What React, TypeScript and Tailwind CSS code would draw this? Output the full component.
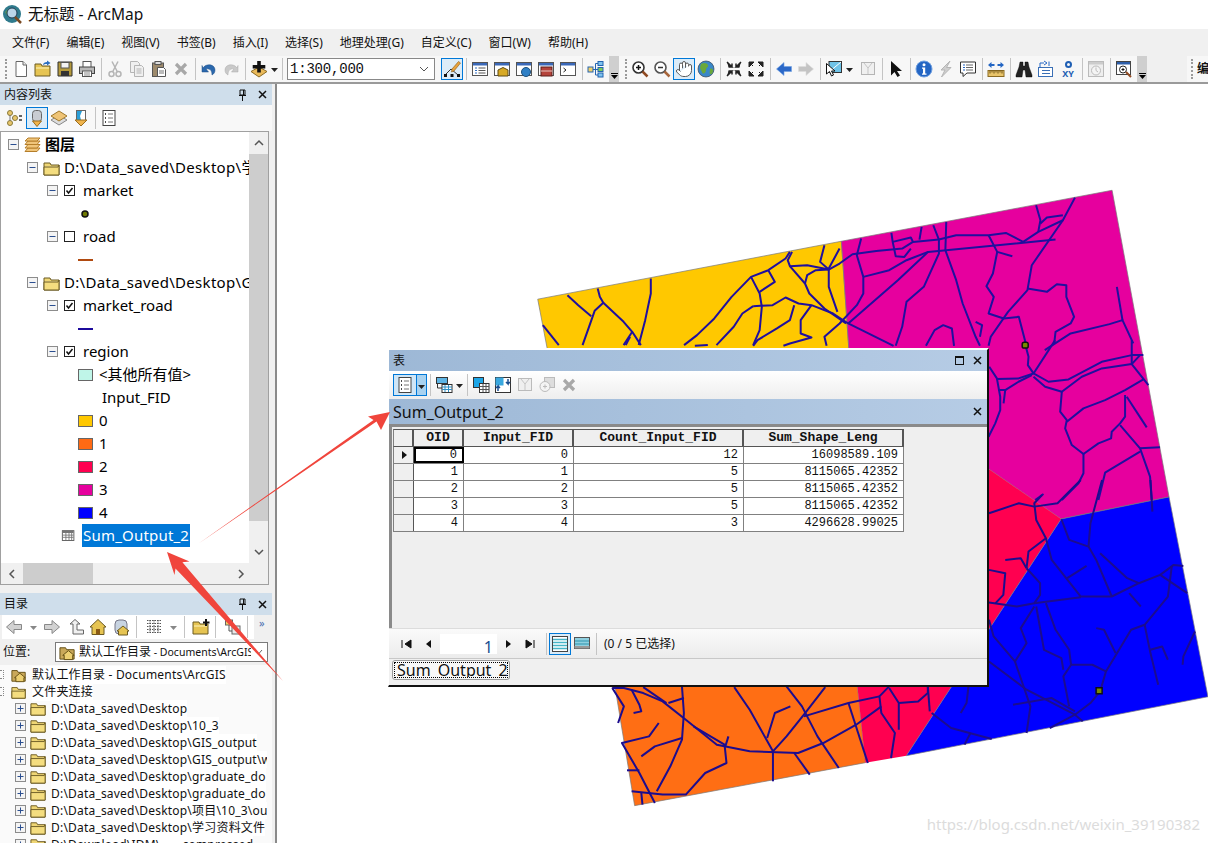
import React from "react";
import { Hand } from "lucide-react";

type N = React.ReactNode;
const S = ({ c, s = 18 }: { c: N; s?: number }) => (
  <svg width={s} height={s} viewBox="0 0 18 18" className="block">{c}</svg>
);

const folder = (f = "#f3dc7a") => (
  <>
    <path d="M1 4h6l1 2h8v10H1z" fill={f} stroke="#6b5a22" />
    <path d="M2 8h13" stroke="#fff6c0" />
  </>
);
const win = (c: N) => (
  <>
    <rect x="1.5" y="2.5" width="15" height="13" fill="#fff" stroke="#555" />
    <rect x="2" y="3" width="14" height="2.5" fill="#3a68b8" />
    {c}
  </>
);

const I: Record<string, N> = {
  doc: <><path d="M4 1.5h7l3.5 3.5v11.5H4z" fill="#fff" stroke="#666" /><path d="M11 1.5V5h3.5" fill="#eee" stroke="#666" /></>,
  open: <>{folder("#e6c452")}<path d="M9 5c0-2 2-3 4-3V.5l3.5 2.5L13 5.500V4c-2 0-3 .5-4 1z" fill="#2c6fc0" /></>,
  save: <><path d="M2 2h14v14H2z" fill="#b59a3c" stroke="#2f2f2f" /><rect x="5" y="2.500" width="8" height="5.500" fill="#f3f3f3" stroke="#555" /><rect x="5" y="11" width="8" height="5" fill="#333" /></>,
  print: <><rect x="5" y="1.500" width="8" height="6" fill="#fff" stroke="#555" /><rect x="1.500" y="7" width="15" height="6.500" fill="#b9b9b9" stroke="#444" /><rect x="4.500" y="11" width="9" height="5.500" fill="#fff" stroke="#555" /><path d="M6 13h6M6 15h6" stroke="#888" /></>,
  cut: <g stroke="#b5b5b5" fill="none" strokeWidth="1.500"><circle cx="5.500" cy="14" r="2.500" /><circle cx="12.500" cy="14" r="2.500" /><path d="M6.500 12 12 1.500M11.500 12 6 1.500" /></g>,
  copy: <g fill="#f0f0f0" stroke="#b5b5b5"><path d="M2.500 1.500h7l2 2v9h-9z" /><path d="M6.500 5.500h7l2 2v9h-9z" /><path d="M8.500 9h5M8.500 11h5M8.500 13h5" /></g>,
  paste: <><rect x="2.500" y="3" width="11" height="13.500" fill="#9d8a6c" stroke="#555" /><rect x="5" y="1.500" width="6" height="3" fill="#ddd" stroke="#555" /><path d="M7.500 7.500h6l2 2v7h-8z" fill="#fff" stroke="#555" /><path d="M9 11h5M9 13h5" stroke="#777" /></>,
  del: <path d="M4 4l10 10M14 4 4 14" stroke="#a8a8a8" strokeWidth="3.200" />,
  undo: <path d="M3 8c3-5 12-4 12 2 0 2-1 4-3 5 0-3-1-7-6-6l2.500 3H2V5.500z" fill="#2b68ad" stroke="#1d4d85" strokeWidth=".5" />,
  redo: <path d="M15 8C12 3 3 4 3 10c0 2 1 4 3 5 0-3 1-7 6-6l-2.500 3H16V5.500z" fill="#c9c9c9" stroke="#aaa" strokeWidth=".5" />,
  add: <><path d="M9 7 17 11.500 9 17 1 11.500z" fill="#e9b95a" stroke="#8a6a22" /><path d="M7.200 1h3.600v4h4.500v3.400h-4.500v4H7.200v-4H2.700V5h4.500z" fill="#111" /></>,
  edit: <><path d="M2 15 8 9l7 6" fill="none" stroke="#333" /><rect x="1" y="14" width="3" height="3" fill="#111" /><rect x="7.500" y="14" width="3" height="3" fill="#111" /><rect x="14" y="14" width="3" height="3" fill="#111" /><path d="M9 9 15.500 1.500l2 1.500L11 11l-2.500 1z" fill="#e8a33e" stroke="#8a5a14" strokeWidth=".6" /></>,
  w1: win(<><path d="M4 8h2M4 10.500h2M4 13h2" stroke="#2f6cc0" /><path d="M7.500 8h7M7.500 10.500h7M7.500 13h7" stroke="#555" /></>),
  w2: win(<path d="M5 16V10l5-2.500 5 2.500v6z" fill="#d7a925" stroke="#5f4a10" />),
  w3: win(<circle cx="11" cy="12" r="4.500" fill="#2f7fc5" stroke="#1c4f7c" />),
  w4: win(<><rect x="4" y="7" width="11" height="9" fill="#b5433b" stroke="#5c1e1a" /><path d="M4 11h11" stroke="#e9c5c0" /></>),
  w5: win(<path d="M4.500 8 7 10l-2.500 2" fill="none" stroke="#222" />),
  tree: <><rect x="1" y="7" width="5" height="5" fill="#f3d066" stroke="#2464b0" /><rect x="11" y="1.500" width="5" height="4" fill="#7ec3ee" stroke="#2464b0" /><rect x="11" y="7.500" width="5" height="4" fill="#7ccc5a" stroke="#2464b0" /><rect x="11" y="13" width="5" height="4" fill="#7ec3ee" stroke="#2464b0" /><path d="M6 9.500h5M8.500 3.500v11.500M8.500 3.500H11M8.500 15H11" stroke="#2464b0" fill="none" /></>,
  zin: <><circle cx="7.500" cy="7.500" r="5.500" fill="#fff" stroke="#333" strokeWidth="1.600" /><path d="M5 7.500h5M7.500 5v5" stroke="#111" strokeWidth="1.500" /><path d="m11.500 11.500 5 5" stroke="#8f4a22" strokeWidth="2.500" /></>,
  zout: <><circle cx="7.500" cy="7.500" r="5.500" fill="#fff" stroke="#555" strokeWidth="1.600" /><path d="M5 7.500h5" stroke="#333" strokeWidth="1.500" /><path d="m11.500 11.500 5 5" stroke="#a8663c" strokeWidth="2.500" /></>,
  globe: <><circle cx="9" cy="9" r="8" fill="#3a87c8" stroke="#345" strokeWidth=".7" /><path d="M4 4c3-2 6-1 7 1s-2 2-2 5-3 5-4 2-3-3-1-8zM13 9c2-1 3 0 3 2s-2 4-3 3 0-3 0-5z" fill="#6aa83a" /></>,
  fin: <path d="M2 2l5 5H3.500M7 7V3.500M16 2l-5 5h3.500M11 7V3.500M2 16l5-5H3.500M7 11v3.500M16 16l-5-5h3.500M11 11v3.500" stroke="#222" strokeWidth="1.500" fill="#222" />,
  fout: <path d="M7 2H2v5zM11 2h5v5zM7 16H2v-5zM11 16h5v-5zM3 3l3 3M15 3l-3 3M3 15l3-3M15 15l-3-3" stroke="#222" fill="#222" />,
  back: <path d="M1.500 9 9 2.500v4h7.500v5H9v4z" fill="#2b68c8" stroke="#6f9fe0" strokeWidth=".6" />,
  fwd: <path d="M16.500 9 9 2.500v4H1.500v5H9v4z" fill="#c4c4c4" stroke="#ddd" strokeWidth=".6" />,
  sel: <><rect x="4" y="1.500" width="12.500" height="11" fill="#6fc3e8" stroke="#333" /><path d="M4 12 16 2" stroke="#fff" /><path d="M1.500 3.500 1.500 14l3-2.500 2 4.500 2-1-2-4H10z" fill="#fff" stroke="#111" /></>,
  clr: <><rect x="2.500" y="2.500" width="13" height="12" fill="#f0f0f0" stroke="#b5b5b5" /><path d="m5 3 4 5 4-5M9 8v6" fill="none" stroke="#c5c5c5" /></>,
  arrow: <path d="M4 1v14.500l3.500-3.500 3 5 2.500-1.500-3-4.500H15z" fill="#111" />,
  info: <><circle cx="9" cy="9" r="8" fill="#2466c4" stroke="#6f9fe0" /><circle cx="9" cy="4.800" r="1.500" fill="#fff" /><path d="M7 7.500h3.200v6H11.500v1.200H7v-1.200h1v-4.800H7z" fill="#fff" /></>,
  flash: <path d="M13 1 4 10h4L4.500 17 14 7.500H9.500z" fill="#cfcfcf" stroke="#b5b5b5" />,
  msg: <><path d="M1.500 2h15v11H8l-4 3.500V13H1.500z" fill="#fff" stroke="#333" /><path d="M4 5h2M4 7.500h2M4 10h2" stroke="#2466c4" strokeWidth="1.200" /><path d="M7 5h7M7 7.500h7M7 10h7" stroke="#666" /></>,
  ruler: <><path d="M1 5 4.500 2v2h3v2h-3v2zM17 5l-3.500-3v2h-3v2h3v2z" fill="#2466c4" /><rect x="1" y="10.500" width="16" height="6" fill="#e9c46a" stroke="#8a6a22" /><path d="M3 10.500v3M5 10.500v2M7 10.500v3M9 10.500v2M11 10.500v3M13 10.500v2M15 10.500v3" stroke="#6e5316" /></>,
  bino: <path d="M5 2h3v4h2V2h3l1 5 3 8v2h-6l-1-7H8l-1 7H1v-2l3-8z" fill="#222" stroke="#000" strokeWidth=".4" />,
  route: <><rect x="1.500" y="7.500" width="14" height="9" fill="#fff" stroke="#3a6fb5" /><path d="M5 10.500h8M5 13.500h8" stroke="#3a6fb5" /><path d="M3 8V3h4M7 1l3 2-3 2M12 6V1.500" stroke="#2466c4" fill="none" /></>,
  clock: <><rect x="1.500" y="1.500" width="15" height="15" fill="#eee" stroke="#bbb" /><rect x="2" y="2" width="14" height="2.500" fill="#ccc" /><circle cx="9" cy="10.500" r="4.500" fill="#f4f4f4" stroke="#bbb" /><path d="M9 7.500v3l2 1.500" stroke="#bbb" fill="none" /></>,
  zwin: <><rect x="1.500" y="1.500" width="14" height="13" fill="#fff" stroke="#444" /><rect x="2" y="2" width="13" height="2.500" fill="#2c5da8" /><circle cx="8" cy="9.500" r="3.500" fill="#fff" stroke="#222" /><path d="M6.500 9.500h3M8 8v3" stroke="#111" /><path d="m11 12 5 5" stroke="#8f4a22" strokeWidth="2" /></>,
  tocD: <><circle cx="4" cy="4" r="2.500" fill="#e8c66a" stroke="#8a7a3a" /><circle cx="9" cy="9" r="2.500" fill="#e8c66a" stroke="#8a7a3a" /><circle cx="4" cy="14" r="2.500" fill="#e8c66a" stroke="#8a7a3a" /><path d="M4 6v6M6 9h1" stroke="#777" /><path d="M13 7h3M13 11h3" stroke="#333" strokeWidth="1.500" /></>,
  tocS: <><rect x="4.500" y="1.500" width="9" height="11" rx="3" fill="#c8ccd2" stroke="#666" /><path d="M4.500 12 9 17.500l4.500-5.500z" fill="#f0b44c" stroke="#9a6d1f" /></>,
  tocV: <><path d="M9 6 17 11 9 16 1 11z" fill="#ddd" stroke="#888" /><path d="M9 2 17 7 9 12 1 7z" fill="#efc476" stroke="#a0792c" /></>,
  tocL: <><rect x="4.500" y="1.500" width="9" height="10" fill="#fff" stroke="#666" /><path d="M5 2h5l-2 5 1 4H5z" fill="#2b9fd8" /><path d="M3 11 9 17l6-6z" fill="#f0b44c" stroke="#9a6d1f" /></>,
  opt: <><rect x="3" y="1.500" width="12" height="15" fill="#fff" stroke="#444" /><path d="M5 5h1M5 9h1M5 13h1" stroke="#111" strokeWidth="1.500" /><path d="M8 5h5M8 9h5M8 13h5" stroke="#777" /></>,
  bk2: <path d="M1.500 9 9 2.500v4h7.500v5H9v4z" fill="#d2d2d2" stroke="#888" />,
  fw2: <path d="M16.500 9 9 2.500v4H1.500v5H9v4z" fill="#d2d2d2" stroke="#888" />,
  up: <><path d="M8 1.500 13 6h-3v6h6.500v4H6V6H3z" fill="#f0f0f0" stroke="#666" /></>,
  home: <><path d="M9 1.500 17 9h-2v7.500H3V9H1z" fill="#e6c452" stroke="#6b5a22" /><rect x="7" y="11" width="4" height="5.500" fill="#8a5a14" /></>,
  dbh: <><rect x="2" y="2" width="12" height="14" rx="4" fill="#c8d4e2" stroke="#778" /><path d="M10 8l6 5h-1.500v4h-9v-4H4z" fill="#e6c452" stroke="#6b5a22" /></>,
  grid: <path d="M2 2.500h14M2 5.500h14M2 8.500h14M2 11.500h14M2 14.500h14M5 2v13M9 2v13M13 2v13" stroke="#555" fill="none" strokeDasharray="1.500 1" />,
  fold: <>{folder("#e6c452")}<path d="M11 3.500H13V1h2v2.500h2.500v2H15V8h-2V5.500h-2z" fill="#111" /></>,
  conn: <><rect x="1.500" y="2" width="7" height="5" fill="#f3d066" stroke="#666" /><rect x="8" y="8" width="8" height="8" fill="#e9e9e9" stroke="#666" /><path d="M5 7v6h3" stroke="#555" fill="none" /></>,
  rel: <><rect x="1.500" y="1.500" width="11" height="6" fill="#5db4e4" stroke="#333" /><path d="M7 12H2.500V8" stroke="#333" fill="none" /><rect x="7" y="8.500" width="10" height="8" fill="#fff" stroke="#333" /><path d="M7 11h10M7 13.500h10M10 9v7M13.500 9v7" stroke="#2f8fc4" /></>,
  tb1: <><rect x="1.500" y="1.500" width="10" height="10" fill="#1ca6e8" stroke="#333" /><rect x="7.500" y="7.500" width="9.500" height="9" fill="#fff" stroke="#333" /><path d="M7.500 10.500h9.500M7.500 13.500h9.500M11 8v8M14 8v8" stroke="#555" /></>,
  tb2: <><rect x="1.500" y="1.500" width="15" height="15" fill="#fff" stroke="#333" /><path d="M1.500 1.500h8v8h-8z" fill="#39a8df" /><path d="M4 15V10l-2 2M4 10l2 2M14 3v5l-2-2M14 8l2-2" stroke="#1a4e90" fill="none" strokeWidth="1.500" /></>,
  tb3: <><rect x="2.500" y="2.500" width="13" height="12" fill="#efefef" stroke="#bbb" /><path d="m5 3 4 5 4-5M9 8v6" fill="none" stroke="#c5c5c5" /></>,
  tb4: <><rect x="6.500" y="1.500" width="10" height="10" fill="#ddd" stroke="#bbb" /><circle cx="7" cy="10.500" r="5" fill="#f4f4f4" stroke="#bbb" /><path d="M5 10.500h4M7 8.500v4" stroke="#bbb" /></>,
  tb5: <path d="M4 4l10 10M14 4 4 14" stroke="#a8a8a8" strokeWidth="3.200" />,
  tabA: <><rect x="1.500" y="1.500" width="15" height="15" fill="#fff" stroke="#444" /><path d="M2 4.500h14M2 7.500h14M2 10.500h14M2 13.500h14" stroke="#46b4c8" strokeWidth="1.500" /></>,
  tabB: <><rect x="1.500" y="2.500" width="15" height="11" fill="#8fd0e0" stroke="#555" /><path d="M2 6h14M2 9h14" stroke="#2d93ad" /><rect x="1.500" y="11" width="15" height="2.500" fill="#999" /></>,
  folderC: <>{folder("#efd675")}<path d="M1 8h14l1-2v10H1z" fill="#f4dd7f" stroke="#6b5a22" /></>,
  folderH: <><path d="M1 4h6l1 2h8v10H1z" fill="#c9a85a" stroke="#5f4a10" /><path d="M10 7l6 5h-1.500v4.500h-9V12H4z" fill="#edd072" stroke="#5f4a10" /></>,
  layers: <g fill="#f0c57a" stroke="#b57e2a"><path d="M4 12h12l-3 3.500H1z" /><path d="M4 8.500h12l-3 3.500H1z" /><path d="M4 5h12l-3 3.500H1z" /><path d="M4 2h12l-3 3H1z" /></g>,
  tableI: <><rect x="1.500" y="3" width="13" height="11" fill="#fff" stroke="#555" /><rect x="2" y="3.500" width="12" height="2" fill="#666" /><path d="M2 8h12M2 10.500h12M5.500 5.500v8M9 5.500v8M12 5.500v8" stroke="#777" /></>,
};

const Btn = ({ n, a }: { n: string; a?: boolean }) => (
  <div
    className={
      "h-[22px] w-[22px] flex items-center justify-center shrink-0 " +
      (a ? "border border-[#0078d7] bg-[#dcecf8]" : "")
    }
  >
    <S c={I[n]} />
  </div>
);
const Sep = () => (
  <div className="w-[6px] h-[22px] flex justify-center shrink-0">
    <div className="w-px h-full bg-[#c4c4c4]" />
  </div>
);
const Drop = ({ c = "#222" }: { c?: string }) => (
  <svg width="9" height="22" viewBox="0 0 9 22" className="shrink-0"><path d="M1 10h7l-3.500 4z" fill={c} /></svg>
);
const Grip = () => (
  <div className="w-[3px] h-[20px] shrink-0 border-l-2 border-dotted border-[#9a9a9a]" />
);
const GripEnd = () => (
  <div className="w-[10px] self-stretch shrink-0 bg-[#cfcfcf] flex flex-col justify-end items-center pb-[3px]">
    <div className="w-[7px] h-px bg-black mb-[1px]" />
    <svg width="7" height="4" viewBox="0 0 7 4"><path d="M0 0h7L3.500 4z" fill="#000" /></svg>
  </div>
);
const Close = ({ s = 9 }: { s?: number }) => (
  <svg width={s} height={s} viewBox="0 0 9 9"><path d="M1 1l7 7M8 1 1 8" stroke="#111" strokeWidth="1.500" /></svg>
);
const Pin = () => (
  <svg width="9" height="12" viewBox="0 0 9 12"><path d="M2 1h5v5H2zM1 6.500h7M4.500 7v5M5.500 1v5" stroke="#111" fill="none" /></svg>
);

const Minus = ({ plus }: { plus?: boolean }) => (
  <svg width="11" height="11" viewBox="0 0 11 11" className="shrink-0">
    <rect x=".5" y=".5" width="10" height="10" fill="#f4f4f4" stroke="#8c8c8c" />
    <path d="M2.500 5.500h6" stroke="#2b4f90" />
    {plus && <path d="M5.500 2.500v6" stroke="#2b4f90" />}
  </svg>
);
const Check = ({ on }: { on: boolean }) => (
  <svg width="11" height="11" viewBox="0 0 11 11" className="shrink-0">
    <rect x=".5" y=".5" width="10" height="10" fill="#fff" stroke="#222" />
    {on && <path d="M2.500 5.500 4.500 8l4-5" fill="none" stroke="#111" strokeWidth="1.500" />}
  </svg>
);

const Row = ({ pad, children }: { pad: string; children: N }) => (
  <div className={"h-[23px] flex items-center whitespace-nowrap " + pad}>{children}</div>
);
const Layer = ({ name, on }: { name: string; on: boolean }) => (
  <Row pad="pl-[46px]">
    <Minus />
    <span className="w-[6px]" />
    <Check on={on} />
    <span className="ml-[8px]">{name}</span>
  </Row>
);
const Swatch = ({ c, t }: { c: string; t: string }) => (
  <Row pad="pl-[77px]">
    <span className={"w-[15px] h-[12px] border border-[#666] shrink-0 " + c} />
    <span className="ml-[6px]">{t}</span>
  </Row>
);

const Toc = () => (
  <div className="h-[454px] mr-[3px] border border-[#a0a0a0] bg-white flex flex-col">
    <div className="flex flex-1 min-h-0">
      <div className="w-[248px] pt-[1px] overflow-hidden text-[15px] text-black">
        <Row pad="pl-[7px]">
          <Minus />
          <span className="ml-[5px]"><S c={I.layers} /></span>
          <span className="ml-[3px] font-bold text-[15px]">图层</span>
        </Row>
        <Row pad="pl-[26px]">
          <Minus />
          <span className="ml-[5px]"><S c={I.folderC} /></span>
          <span className="ml-[3px] tracking-[.3px]">D:\Data_saved\Desktop\学</span>
        </Row>
        <Layer name="market" on />
        <Row pad="pl-[77px]">
          <svg width="14" height="10" viewBox="0 0 14 10"><circle cx="7" cy="5" r="3" fill="#6f7a00" stroke="#111" strokeWidth="1.500" /></svg>
        </Row>
        <Layer name="road" on={false} />
        <Row pad="pl-[77px]"><span className="w-[15px] h-[2px] bg-[#b04a10]" /></Row>
        <Row pad="pl-[26px]">
          <Minus />
          <span className="ml-[5px]"><S c={I.folderC} /></span>
          <span className="ml-[3px] tracking-[.3px]">D:\Data_saved\Desktop\GIS</span>
        </Row>
        <Layer name="market_road" on />
        <Row pad="pl-[77px]"><span className="w-[15px] h-[2px] bg-[#1c0a9c]" /></Row>
        <Layer name="region" on />
        <Row pad="pl-[77px]">
          <span className="w-[15px] h-[12px] border border-[#666] bg-[#bff5e8] shrink-0" />
          <span className="ml-[6px]">&lt;其他所有值&gt;</span>
        </Row>
        <Row pad="pl-[101px]">Input_FID</Row>
        <Swatch c="bg-[#ffc800]" t="0" />
        <Swatch c="bg-[#ff6a14]" t="1" />
        <Swatch c="bg-[#ff0050]" t="2" />
        <Swatch c="bg-[#e6009e]" t="3" />
        <Swatch c="bg-[#0000ff]" t="4" />
        <Row pad="pl-[60px]">
          <S c={I.tableI} s={16} />
          <span className="ml-[5px] bg-[#0078d7] text-white px-[1px] h-[23px] leading-[22px] tracking-[.2px]">Sum_Output_2</span>
        </Row>
      </div>
      <div className="w-[19px] bg-[#f0f0f0] flex flex-col items-center">
        <div className="h-[22px] flex items-center">
          <svg width="10" height="8" viewBox="0 0 10 8"><path d="M1 6l4-4 4 4" fill="none" stroke="#555" strokeWidth="1.500" /></svg>
        </div>
        <div className="w-full h-[367px] bg-[#cdcdcd]" />
        <div className="flex-1" />
        <div className="h-[22px] flex items-center">
          <svg width="10" height="8" viewBox="0 0 10 8"><path d="M1 2l4 4 4-4" fill="none" stroke="#555" strokeWidth="1.500" /></svg>
        </div>
      </div>
    </div>
    <div className="h-[21px] bg-[#f0f0f0] flex items-center shrink-0">
      <div className="w-[22px] flex justify-center">
        <svg width="8" height="10" viewBox="0 0 8 10"><path d="M6 1 2 5l4 4" fill="none" stroke="#555" strokeWidth="1.500" /></svg>
      </div>
      <div className="w-[70px] h-full bg-[#cdcdcd]" />
      <div className="flex-1" />
      <div className="w-[42px] flex justify-center pr-[12px]">
        <svg width="8" height="10" viewBox="0 0 8 10"><path d="M2 1l4 4-4 4" fill="none" stroke="#555" strokeWidth="1.500" /></svg>
      </div>
    </div>
  </div>
);

const catalog = [
  "D:\\Data_saved\\Desktop",
  "D:\\Data_saved\\Desktop\\10_3",
  "D:\\Data_saved\\Desktop\\GIS_output",
  "D:\\Data_saved\\Desktop\\GIS_output\\w",
  "D:\\Data_saved\\Desktop\\graduate_do",
  "D:\\Data_saved\\Desktop\\graduate_do",
  "D:\\Data_saved\\Desktop\\项目\\10_3\\ou",
  "D:\\Data_saved\\Desktop\\学习资料文件",
  "D:\\Download\\IDM\\____compressed",
];

const Catalog = () => (
  <div className="flex-1 flex flex-col min-h-0">
    <div className="h-[22px] bg-[#cfdeeb] flex items-center pl-[4px] pr-[5px] text-[12px] shrink-0">
      <span className="flex-1">目录</span>
      <Pin />
      <span className="w-[11px]" />
      <Close />
    </div>
    <div className="h-[24px] flex items-center pl-[2px] shrink-0">
      <div className="flex items-center bg-white h-[24px] w-[252px] pl-[1px]">
        <Btn n="bk2" /><span className="w-[4px]" /><Drop c="#888" /><span className="w-[3px]" /><Btn n="fw2" /><span className="w-[2px]" /><Btn n="up" /><Btn n="home" /><span className="w-[2px]" /><Btn n="dbh" />
        <Sep /><span className="w-[4px]" /><Btn n="grid" /><span className="w-[4px]" /><Drop c="#888" /><span className="w-[3px]" /><Sep /><span className="w-[3px]" /><Btn n="fold" /><Sep /><span className="w-[4px]" /><Btn n="conn" /><Sep />
      </div>
      <span className="text-[11px] text-[#4a6fb0] ml-[5px] -mt-[8px]">»</span>
    </div>
    <div className="h-[26px] flex items-center pl-[3px] text-[12px] shrink-0">
      <span className="w-[52px]">位置:</span>
      <div className="w-[213px] h-[20px] border border-[#7a7a7a] bg-white flex items-center pl-[3px] overflow-hidden whitespace-nowrap">
        <S c={I.folderH} s={17} />
        <span className="ml-[3px] w-[172px] overflow-hidden">默认工作目录<span className="text-[10.500px]"> - Documents\ArcGIS</span></span>
        <svg className="ml-[3px] shrink-0" width="9" height="6" viewBox="0 0 9 6"><path d="M1 1l3.500 4L8 1" fill="none" stroke="#666" /></svg>
      </div>
    </div>
    <div className="flex-1 overflow-hidden text-[12px] bg-[#fafafa] whitespace-nowrap text-[#111] tracking-[.2px] pt-[1px]">
      <div className="h-[17px] flex items-center">
        <span className="w-[4px] h-[9px] border border-l-0 border-dotted border-[#888] shrink-0" />
        <span className="ml-[7px]"><S c={I.folderH} s={16} /></span>
        <span className="ml-[5px] bg-white">默认工作目录 - Documents\ArcGIS</span>
      </div>
      <div className="h-[17px] flex items-center">
        <span className="w-[4px] h-[9px] border border-l-0 border-dotted border-[#888] shrink-0" />
        <span className="ml-[7px]"><S c={I.folderC} s={16} /></span>
        <span className="ml-[5px] bg-white">文件夹连接</span>
      </div>
      {catalog.map((t, i) => (
        <div key={i} className="h-[17px] flex items-center pl-[15px] w-[267px] overflow-hidden">
          <Minus plus />
          <span className="ml-[4px]"><S c={I.folderC} s={17} /></span>
          <span className="ml-[4px] bg-white">{t}</span>
        </div>
      ))}
    </div>
  </div>
);

const cols = ["OID", "Input_FID", "Count_Input_FID", "Sum_Shape_Leng"];
const data = [
  ["0", "0", "12", "16098589.109"],
  ["1", "1", "5", "8115065.42352"],
  ["2", "2", "5", "8115065.42352"],
  ["3", "3", "5", "8115065.42352"],
  ["4", "4", "3", "4296628.99025"],
];
const gridCols = "grid grid-cols-[20px_50px_110px_170px_160px] grid-rows-[1fr] w-[511px] border-l border-[#808080]";

const TableWindow = () => (
  <div className="absolute left-[388px] top-[348px] w-[601px] h-[339px] flex flex-col bg-[#f0f0f0] border-t-2 border-l border-white border-r-2 border-b-2 border-r-[#111] border-b-[#111] text-[#111]">
    <div className="h-[21px] bg-gradient-to-r from-[#9db8d6] to-[#b6cce5] flex items-center pl-[4px] pr-[5px] text-[12px] shrink-0">
      <span className="flex-1">表</span>
      <span className="w-[9px] h-[9px] border border-[#111] border-t-2 mr-[9px]" />
      <Close />
    </div>
    <div className="h-[28px] bg-gradient-to-b from-[#ffffff] to-[#eeeeee] flex items-center pl-[4px] shrink-0">
      <div className="flex items-center border border-[#0078d7] bg-[#cfe6f7] h-[22px]">
        <div className="w-[22px] flex justify-center"><S c={I.opt} /></div>
        <div className="w-[10px] h-full border-l border-[#0078d7] bg-[#a8d2f0]"><Drop /></div>
      </div>
      <Sep />
      <Btn n="rel" /><Drop /><Sep />
      <Btn n="tb1" /><Btn n="tb2" /><Btn n="tb3" /><Btn n="tb4" /><Btn n="tb5" />
    </div>
    <div className="h-[25px] bg-gradient-to-r from-[#9db8d6] to-[#b6cce5] flex items-center pl-[4px] pr-[5px] text-[16px] shrink-0">
      <span className="flex-1">Sum_Output_2</span>
      <Close />
    </div>
    <div className="flex-1 min-h-0 border-t-[3px] border-l-[3px] border-[#8a8a8a] bg-[#efefef] pl-[1px] pt-[2px] [font-family:'Liberation_Mono',monospace] text-[12px] leading-[14px]">
      <div className={gridCols + " h-[18px] border-t border-t-[#555] border-b border-b-[#555]"}>
        <div className="border-r-2 border-[#555] bg-[#efefef] min-h-0" />
        {cols.map((c) => (
          <div key={c} className="border-r-2 border-[#555] flex items-center justify-center font-bold text-[13px] bg-[#efefef] min-h-0">{c}</div>
        ))}
      </div>
      {data.map((r, i) => (
        <div key={i} className={gridCols + " h-[17px] border-b border-b-[#808080]"}>
          <div className="bg-[#efefef] border-r border-[#555] flex items-center pl-[8px] min-h-0">
            {i === 0 && <svg width="5" height="8" viewBox="0 0 5 8"><path d="M0 0l5 4-5 4z" fill="#111" /></svg>}
          </div>
          {r.map((v, j) => (
            <div
              key={j}
              className={
                "bg-white flex items-center justify-end pr-[5px] min-h-0 " +
                (i === 0 && j === 0 ? "border-2 border-black" : "border-r border-[#808080]")
              }
            >
              {v}
            </div>
          ))}
        </div>
      ))}
    </div>
    <div className="h-[30px] bg-gradient-to-b from-[#fafafa] to-[#ececec] border-t border-[#dcdcdc] flex items-center pl-[7px] text-[12px] shrink-0">
      <svg width="22" height="20" viewBox="0 0 22 20"><path d="M6 6v8M15 6l-6 4 6 4z" stroke="#111" fill="#111" /></svg>
      <svg width="22" height="20" viewBox="0 0 22 20"><path d="M13 6l-5 4 5 4z" fill="#111" /></svg>
      <div className="w-[57px] h-[20px] bg-white text-right pr-[4px] text-[16px] leading-[26px] text-[#1a4e90]">1</div>
      <svg width="22" height="20" viewBox="0 0 22 20"><path d="M9 6l5 4-5 4z" fill="#111" /></svg>
      <svg width="22" height="20" viewBox="0 0 22 20"><path d="M7 6l6 4-6 4zM15 6v8" stroke="#111" fill="#111" /></svg>
      <span className="w-[2px]" />
      <Sep />
      <Btn n="tabA" a />
      <Btn n="tabB" />
      <Sep />
      <span className="ml-[5px]">(0 / 5 已选择)</span>
    </div>
    <div className="h-[27px] bg-[#f0f0f0] border-t border-[#c8c8c8] pl-[3px] pt-[1px] shrink-0">
      <div className="w-[118px] h-[20px] border border-[#9a9a9a] rounded-[3px] bg-[#f8f8f8] p-[1px]">
        <div className="h-full border border-dotted border-black text-[16px] leading-[15px] pl-[2px] whitespace-nowrap overflow-hidden">Sum_Output_2</div>
      </div>
    </div>
  </div>
);

const roads7 = [
  "85,345 110,375 140,408", "155,325 160,350 168,368 148,392 135,440 120,495", "168,368 215,425 235,455 255,495",
  "235,455 215,495", "230,470 220,495", "278,295 278,340 265,420 250,495", "28,435 65,495",
  "600,215 590,235 550,270 510,290 465,350 425,415 385,465 355,495", "510,290 530,340 535,380 530,450 515,495",
  "550,270 565,305 530,335", "605,215 595,240 600,258 640,255 690,268 715,250 745,222 800,212 860,205 885,185 945,178",
  "690,268 660,270 640,285 635,310 645,340 680,385 730,430", "600,258 635,310", "680,195 670,245 690,268",
  "715,205 690,265 690,320 710,395", "515,378 490,400 470,440 430,495", "515,378 560,375 590,352 620,370 650,375 700,400 735,430",
  "650,375 625,420 625,460 650,472 600,490 585,497", "610,375 600,420 570,445 525,480 515,497",
  "765,175 755,225 770,290 770,340 755,375 715,430 680,470 685,497", "770,290 830,270 870,240 920,215 1215,178",
  "735,430 840,497", "920,215 850,300 735,430", "835,158 838,185 845,228 865,230 880,205", "838,185 880,172 885,185",
  "905,140 900,178", "932,135 945,178 945,220 910,320 870,365 860,440 845,497", "962,125 960,210 985,300 1000,370 1030,470 1040,497",
  "945,178 985,165 1060,165 1100,158 1140,185 1175,155 1232,120 1260,52", "1170,75 1180,120 1175,155", "1180,130 1195,112 1232,105",
  "1232,120 1160,255 1150,330 1105,395 1065,470 1060,497", "1060,165 1080,215 1115,228",
  "1080,215 1070,280 1055,318 1072,350 1060,400 1095,415 1130,410 1147,495",
  "1150,325 1195,335 1218,312 1240,315 1240,350 1258,410 1250,430 1215,455 1212,490", "1190,510 1250,460 1340,432 1370,420 1395,490",
  "1357,320 1370,420", "915,497 935,450 955,435 975,445 980,497", "1030,425 1045,435 1040,470", "380,497 410,495",
];
const roads9 = [
  "122,20 130,50 128,75 145,100", "12,80 35,115 45,170 45,210 30,250 10,290", "35,117 100,115 145,100 190,125 250,118 350,65 440,45 475,45",
  "145,110 180,140 230,155 290,110 350,85 440,72 465,45", "60,150 100,125 140,105", "40,150 60,150 55,190", "440,0 440,72 490,135",
  "230,155 225,215 245,240 240,265 260,315 295,342 340,310 378,295 380,275 405,250 420,230 420,165", "245,245 295,205 360,180 420,150 475,118",
  "425,170 485,262", "405,255 465,325 495,410 500,480", "465,325 525,322", "465,335 360,398 340,480", "295,342 295,400 280,430 230,480",
  "150,480 175,462", "145,100 210,0",
];
const roads8 = [
  "1003,100 1080,70 1120,80 1180,70 1240,0", "1140,45 1120,70 1125,120 1150,175 1105,215 1100,265", "1295,0 1265,130 1260,200", "1420,0 1425,95",
  "1190,118 1210,180 1260,200 1280,240 1320,350", "1290,220 1360,295 1390,310 1445,285 1480,255 1505,258", "1150,175 1165,240 1240,350 1320,350 1390,310",
  "1100,265 1135,310 1135,345 1120,370 1075,380 1003,368", "1120,370 1240,352", "1255,258 1205,295", "1365,340 1395,380", "1445,285 1515,340",
  "1475,260 1465,350 1405,435 1370,450 1305,575 1290,635 1265,670 1225,705", "1405,435 1420,520 1440,615", "1420,510 1450,500 1465,540",
  "1535,455 1505,530 1503,555", "1280,445 1300,450 1330,520", "1120,380 1085,445 1100,490 1070,545 1015,470 1003,420", "1150,370 1175,450 1210,510 1215,555 1195,590 1210,680",
  "1215,555 1270,555 1305,575", "1125,380 1145,510 1190,535 1195,570", "1003,545 1100,630 1225,705 1245,725", "1070,545 1110,680 1100,760", "1065,675 1165,655 1225,695",
  "1225,705 1160,745", "855,700 905,745 1010,778", "950,620 945,670 930,700", "955,760 940,795",
  "1003,270 1045,280 1040,345 1020,370", "1045,240 1085,235 1100,265",
  "745,620 720,650 725,700 760,760 750,835", "745,625 770,670 770,750", "770,670 820,665 845,640 845,620", "845,620 850,695",
  "30,625 60,625 110,640 160,665 220,720 300,795 385,815 510,820 575,790 660,735 725,680", "525,710 640,670 720,650", "580,622 525,705 480,770 445,815",
  "480,620 520,680 560,770 615,865", "345,622 385,690 445,815", "445,815 445,905", "490,680 450,700 430,775", "500,820 540,885",
  "210,620 215,700 210,780 180,860 145,935", "110,622 170,670", "215,655 175,670", "80,630 100,675 105,695 85,700", "30,625 60,680 45,730",
  "150,730 125,770 55,790 100,880 140,970", "105,830 140,800 210,775", "240,740 320,795 325,850 270,880 220,945 160,945 80,935", "330,770 322,800",
  "68,872 100,872", "105,940 108,975", "640,670 690,850",
];

const Roads = ({ list, tf, c }: { list: string[]; tf: string; c: string }) => (
  <g transform={tf} fill="none" stroke={c} strokeWidth="2" strokeLinejoin="round">
    {list.map((p, i) => (
      <polyline key={i} points={p} vectorEffect="non-scaling-stroke" />
    ))}
  </g>
);

const MapView = () => (
  <svg viewBox="276 84 932 759" className="w-full h-full block">
    <g stroke="#7a7a7a" strokeWidth=".7">
      <polygon points="537,299 841,241 852,400 700,600 612,690" fill="#ffc800" />
      <polygon points="841,241 1112,190 1169,497 1061,519 990,470 852,400" fill="#e6009e" />
      <polygon points="600,600 848,600 865,763 634,806" fill="#ff6e14" />
      <polygon points="848,600 800,420 990,470 1061,519 906,756 865,763" fill="#ff0050" stroke="none" />
      <polygon points="1061,519 1169,497 1208,697 906,756" fill="#0000ff" />
    </g>
    <Roads list={roads7} tf="translate(530 180) scale(.4324 .3333)" c="#1f0f9e" />
    <Roads list={roads9} tf="translate(985 340) scale(.3333)" c="#1f0f9e" />
    <Roads list={roads8} tf="translate(600 480) scale(.3876 .3333)" c="#1c0c8e" />
    <rect x="1022" y="342" width="6" height="6" rx="2" fill="#7a8a00" stroke="#111" strokeWidth="1.500" />
    <rect x="1096" y="688" width="6" height="6" fill="#7a8a00" stroke="#111" strokeWidth="1.500" />
  </svg>
);

export default function App() {
  return (
    <div className="relative w-[1208px] h-[843px] overflow-hidden flex flex-col bg-[#f0f0f0] text-[#111] [font-family:'Noto_Sans','Noto_Sans_CJK_SC',sans-serif]">
      <div className="h-[29px] bg-white flex items-center pl-[2px] text-[15.500px] shrink-0">
        <svg width="21" height="21" viewBox="0 0 21 21"><circle cx="10" cy="10" r="9" fill="#2f7a8c" /><path d="M3 8c3-4 8-5 12-2-2 1-3 4-6 4s-3 4-6-2z" fill="#5e9a5a" /><circle cx="10" cy="9" r="5" fill="#bcd6e8" stroke="#1e3b55" /><path d="m13 13 6 6" stroke="#7a4a22" strokeWidth="2.500" /></svg>
        <span className="ml-[5px]">无标题 - ArcMap</span>
      </div>
      <div className="h-[27px] flex items-center pl-[12px] text-[12px] shrink-0 gap-[17px]">
        {["文件(F)", "编辑(E)", "视图(V)", "书签(B)", "插入(I)", "选择(S)", "地理处理(G)", "自定义(C)", "窗口(W)", "帮助(H)"].map((m) => (
          <span key={m}>{m}</span>
        ))}
      </div>
      <div className="h-[28px] flex items-stretch shrink-0 border-b-2 border-[#9a9a9a]">
        <div className="flex items-center bg-[#f7f7f7] pl-[5px]">
          <Grip />
          <span className="w-[2px]" />
          <Btn n="doc" /><Btn n="open" /><Btn n="save" /><Btn n="print" /><Sep />
          <Btn n="cut" /><Btn n="copy" /><Btn n="paste" /><Btn n="del" /><Sep />
          <Btn n="undo" /><Btn n="redo" /><Sep />
          <Btn n="add" /><Drop /><Sep />
          <span className="w-[2px]" />
          <div className="w-[148px] h-[22px] border border-[#888] bg-white flex items-center pl-[2px] pr-[5px] [font-family:'Liberation_Mono',monospace] text-[14px] shrink-0">
            <span className="flex-1 tracking-[-.2px]">1:300,000</span>
            <svg width="10" height="6" viewBox="0 0 10 6"><path d="M1 1l4 4 4-4" fill="none" stroke="#555" /></svg>
          </div>
          <span className="w-[6px]" />
          <Btn n="edit" a /><Sep />
          <Btn n="w1" /><Btn n="w2" /><Btn n="w3" /><Btn n="w4" /><Btn n="w5" /><Sep />
          <Btn n="tree" />
          <span className="w-[2px]" />
        </div>
        <GripEnd />
        <div className="flex items-center bg-[#f7f7f7] pl-[6px]">
          <Grip />
          <span className="w-[1px]" />
          <Btn n="zin" /><Btn n="zout" /><div className="w-[22px] h-[22px] border border-[#0078d7] bg-[#dcecf8] flex items-center justify-center shrink-0"><Hand size={18} strokeWidth={1.300} color="#555" fill="#fff" /></div><Btn n="globe" /><Sep />
          <Btn n="fin" /><Btn n="fout" /><Sep />
          <Btn n="back" /><Btn n="fwd" /><Sep />
          <Btn n="sel" /><Drop /><span className="w-[3px]" /><Btn n="clr" /><Sep />
          <Btn n="arrow" /><Sep />
          <Btn n="info" /><Btn n="flash" /><Btn n="msg" /><Sep />
          <Btn n="ruler" /><Sep />
          <Btn n="bino" /><Btn n="route" />
          <div className="w-[22px] h-[22px] flex flex-col items-center justify-center shrink-0 text-[#1f5fb4] font-bold text-[9px] leading-[9px]">
            <span className="w-[7px] h-[7px] rounded-full border-2 border-[#1f5fb4] mb-[1px]" />
            <span>XY</span>
          </div>
          <Sep />
          <Btn n="clock" /><Sep />
          <Btn n="zwin" />
          <span className="w-[2px]" />
        </div>
        <GripEnd />
        <div className="flex-1" />
        <div className="flex items-center bg-[#f7f7f7] pl-[4px] w-[21px] overflow-hidden whitespace-nowrap text-[12px]">
          <Grip />
          <span className="ml-[3px] font-bold">编辑器</span>
        </div>
      </div>
      <div className="flex-1 flex min-h-0">
        <div className="w-[272px] flex flex-col shrink-0">
          <div className="h-[21px] bg-[#cfdeeb] flex items-center pl-[4px] pr-[5px] text-[12px] shrink-0">
            <span className="flex-1">内容列表</span>
            <Pin />
            <span className="w-[11px]" />
            <Close />
          </div>
          <div className="h-[26px] flex items-center pl-[4px] shrink-0 bg-[#f8f8f8]">
            <Btn n="tocD" /><Btn n="tocS" a /><Btn n="tocV" /><Btn n="tocL" /><Sep /><Btn n="opt" />
          </div>
          <Toc />
          <div className="h-[8px] shrink-0" />
          <Catalog />
        </div>
        <div className="w-[3px] shrink-0 bg-[#f0f0f0]" />
        <div className="flex-1 min-w-0 bg-white border-l-2 border-[#8a8a8a] relative">
          <MapView />
          <div className="absolute right-[8px] bottom-[8px] text-[15px] text-[#dcdcdc] whitespace-nowrap">https://blog.csdn.net/weixin_39190382</div>
        </div>
      </div>
      <TableWindow />
      <svg className="absolute inset-0 pointer-events-none" width="1208" height="843" viewBox="0 0 1208 843">
        <polygon points="198,544 376.500,421.500 381,430 390,412 368,416.500 373.500,420" fill="#f0453c" />
        <polygon points="283,681 182.400,562.300 189.500,561.500 167,552 174.500,575 175.500,568.500" fill="#f0453c" />
      </svg>
    </div>
  );
}
